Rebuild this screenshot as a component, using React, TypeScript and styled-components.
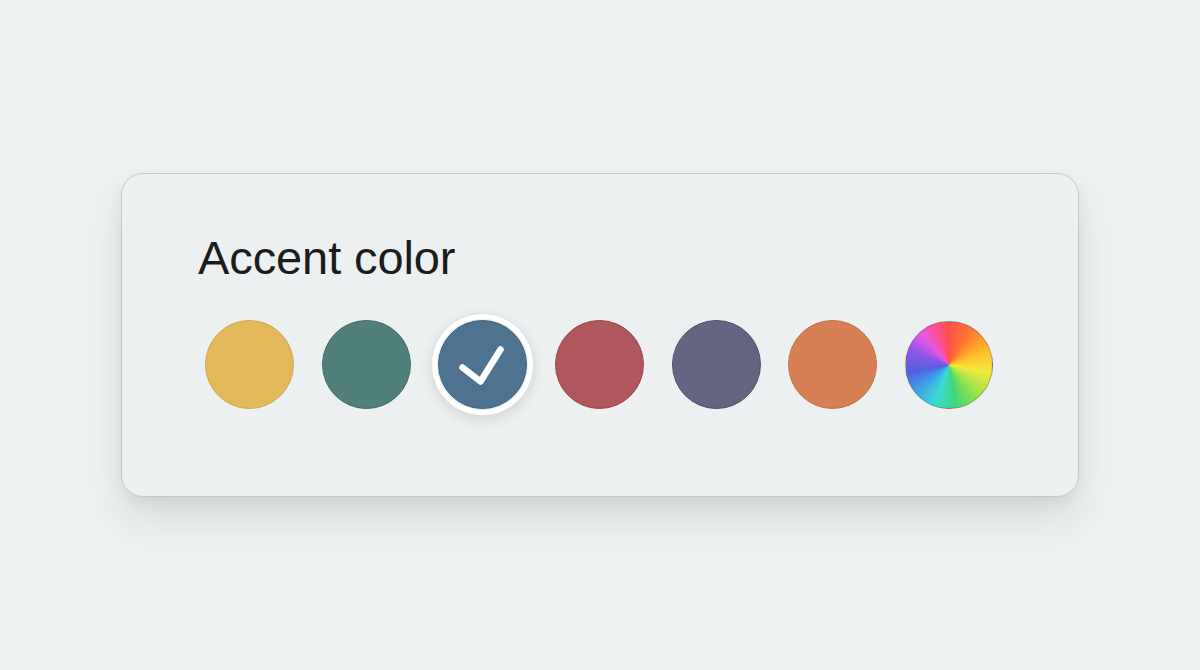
import React, { useState } from "react";
import styled, { createGlobalStyle } from "styled-components";

const GlobalStyle = createGlobalStyle`
  html, body {
    margin: 0;
    padding: 0;
    background: #eef1f1;
    font-family: "Liberation Sans", Arial, sans-serif;
  }
`;

const SWATCHES: { name: string; color: string; edge: string }[] = [
  { name: "yellow", color: "#e1b95b", edge: "#d2a84c" },
  { name: "teal", color: "#51807a", edge: "#3f6c66" },
  { name: "blue", color: "#4e7390", edge: "#3f627d" },
  { name: "red", color: "#b0565d", edge: "#9a454c" },
  { name: "purple", color: "#646483", edge: "#4f4f6d" },
  { name: "orange", color: "#d77f55", edge: "#c66f47" },
];

const App = () => {
  const [selected, _setSelected] = useState<string>("blue");

  return (
    <>
      <GlobalStyle />
      <Page>
        <Card>
          <Title>Accent color</Title>
          <Row>
            {SWATCHES.map((s) => (
              <Swatch
                key={s.name}
                $color={s.color}
                $edge={s.edge}
                $active={selected === s.name}
                onClick={() => _setSelected(s.name)}
                aria-label={s.name}
              >
                {selected === s.name && (
                  <svg width="89" height="89" viewBox="0 0 89 89">
                    <path
                      d="M24.5 47.5 L42.5 61.5 L62.5 29.5"
                      fill="none"
                      stroke="#ffffff"
                      strokeWidth="6.5"
                      strokeLinecap="round"
                      strokeLinejoin="round"
                    />
                  </svg>
                )}
              </Swatch>
            ))}
            <Rainbow
              $active={selected === "custom"}
              onClick={() => _setSelected("custom")}
              aria-label="custom"
            />
          </Row>
        </Card>
      </Page>
    </>
  );
};

export default App;

/*//////////////////////////////////////////////////////////////////////////
/////////////////////////////// S T Y L E  /////////////////////////////////
//////////////////////////////////////////////////////////////////////////*/

const Page = styled.div`
  width: 1200px;
  height: 670px;
  box-sizing: border-box;
  padding-top: 173px;
  padding-left: 121px;
  background: #eef1f1;
`;

const Card = styled.div`
  width: 958px;
  height: 324px;
  box-sizing: border-box;
  padding: 57px 0 0 76px;
  border: 1px solid #c7cacb;
  border-radius: 22px;
  background: #edf0f1;
  box-shadow: 0 22px 40px rgba(0, 0, 0, 0.09), 0 6px 14px rgba(0, 0, 0, 0.05);
`;

const Title = styled.h2`
  margin: 0;
  font-size: 47px;
  font-weight: 400;
  line-height: 53px;
  color: #1c1c1c;
  letter-spacing: -0.1px;
`;

const Row = styled.div`
  display: flex;
  align-items: center;
  gap: 27.7px;
  margin-top: 36px;
  margin-left: 7px;
`;

const Swatch = styled.button<{ $color: string; $edge: string; $active: boolean }>`
  width: 89px;
  height: 89px;
  flex: none;
  padding: 0;
  border-radius: 50%;
  border: 1.5px solid ${(p) => p.$edge};
  background: ${(p) => p.$color};
  cursor: pointer;
  display: flex;
  align-items: center;
  justify-content: center;
  box-shadow: ${(p) =>
    p.$active
      ? "0 0 0 1px #e9ecec, 0 0 0 6px #ffffff, 0 0 0 7px #dfe2e2, 0 4px 14px 6px rgba(0,0,0,0.13)"
      : "none"};

  svg {
    display: block;
    margin: -1.5px;
  }
`;

const Rainbow = styled.button<{ $active: boolean }>`
  width: 88px;
  height: 88px;
  flex: none;
  padding: 0;
  border-radius: 50%;
  border: 1.5px solid rgba(120, 110, 90, 0.45);
  cursor: pointer;
  background: conic-gradient(
    from 0deg,
    #ff4f4a 0deg,
    #ff7a2e 35deg,
    #ffb52a 65deg,
    #f2ea3a 100deg,
    #8fe24e 140deg,
    #3fd77a 170deg,
    #3cd9d4 200deg,
    #3e9bea 235deg,
    #5460e0 260deg,
    #8a55e6 290deg,
    #e957e6 318deg,
    #ff4f8a 342deg,
    #ff4f4a 360deg
  );
  box-shadow: ${(p) => (p.$active ? "0 0 0 6px #ffffff" : "none")};
`;
